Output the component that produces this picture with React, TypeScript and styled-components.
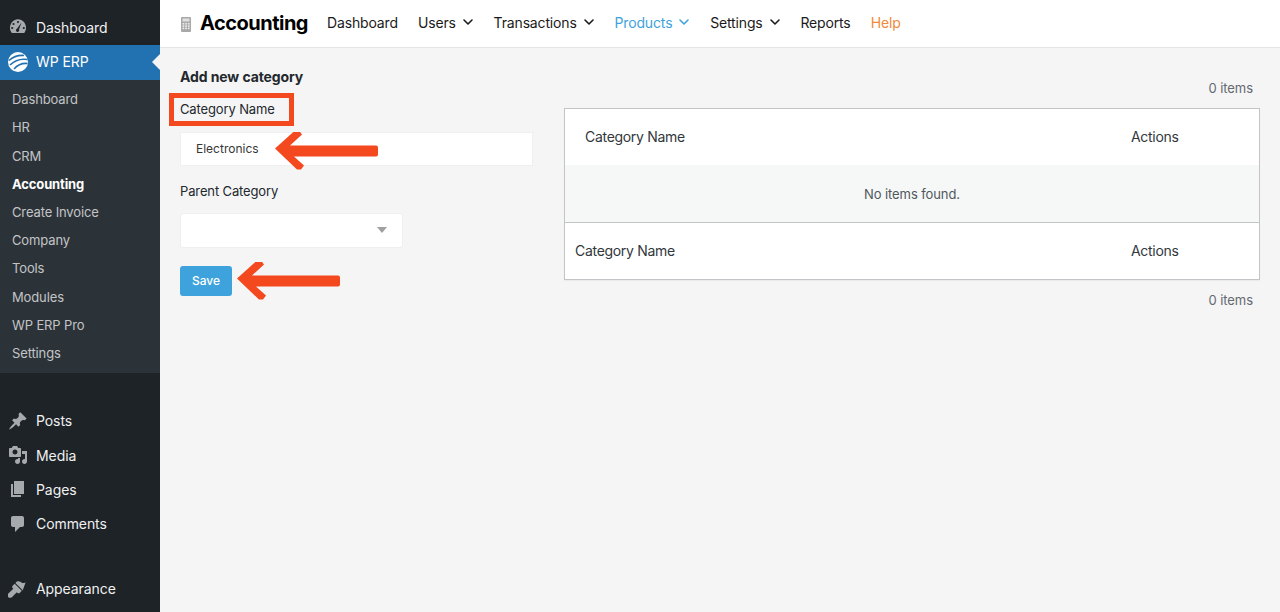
import React, { FC, ReactNode } from 'react';
import styled, { createGlobalStyle } from 'styled-components';
import { ChevronDown } from 'lucide-react';

const GlobalStyle = createGlobalStyle`
	html, body {
		margin: 0;
		padding: 0;
		height: 100%;
		background: #f5f5f5;
		font-family: Inter, "Liberation Sans", sans-serif;
		-webkit-font-smoothing: antialiased;
	}
	* {
		box-sizing: border-box;
	}
`;

const Page = styled.div`
	display: flex;
	width: 1280px;
	height: 612px;
	overflow: hidden;
`;

const Sidebar = styled.aside`
	width: 160px;
	flex-shrink: 0;
	padding-top: 11px;
	background-color: #1d2327;
`;

const MenuItem = styled.div<{ $active?: boolean }>`
	position: relative;
	display: flex;
	align-items: center;
	gap: 8px;
	height: 34.3px;
	padding: 0 0 1.5px 8px;
	font-size: 14px;
	letter-spacing: -0.08px;
	color: ${(p) => (p.$active ? '#fff' : '#f0f0f1')};
	background-color: ${(p) => (p.$active ? '#2271b1' : 'transparent')};
	${(p) =>
		p.$active &&
		`&::after {
			content: '';
			position: absolute;
			right: 0;
			top: 50%;
			margin-top: -8px;
			border: 8px solid transparent;
			border-right-color: #f5f5f5;
		}`}
`;

const MenuIcon = styled.svg`
	width: 20px;
	height: 20px;
	flex-shrink: 0;
	fill: #a7aaad;
`;

const SubMenu = styled.div`
	padding: 6.1px 0 5.9px;
	margin-bottom: 31px;
	background-color: #2c3338;
`;

const SubItem = styled.div<{ $current?: boolean }>`
	display: flex;
	align-items: center;
	height: 28.2px;
	padding: 0 0 1px 12px;
	font-size: 13px;
	letter-spacing: -0.13px;
	font-weight: ${(p) => (p.$current ? 700 : 400)};
	color: ${(p) => (p.$current ? '#fff' : '#c3c4c7')};
`;

const MenuGap = styled.div`
	height: 30.6px;
`;

const Main = styled.main`
	flex: 1;
	min-width: 0;
`;

const TopBar = styled.header`
	display: flex;
	align-items: center;
	height: 48px;
	padding: 0 0 1px 21px;
	background-color: #fff;
	border-bottom: 1px solid #e5e5e5;
`;

const AppIcon = styled.svg`
	width: 10px;
	height: 15px;
	margin-top: 2px;
	margin-right: 9px;
`;

const AppTitle = styled.h1`
	margin: 0 19px 0 0;
	font-size: 20px;
	font-weight: 700;
	letter-spacing: -0.5px;
	color: #000;
`;

const Nav = styled.nav`
	display: flex;
	align-items: center;
	gap: 20px;
	margin-top: -1px;
`;

const NavItem = styled.div<{ $color?: string }>`
	display: flex;
	align-items: center;
	gap: 4px;
	font-size: 14px;
	letter-spacing: -0.15px;
	color: ${(p) => p.$color || '#1a1a1a'};
	svg {
		margin-right: -2.2px;
		margin-top: -1px;
	}
`;

const Content = styled.div`
	display: flex;
	gap: 31px;
	padding: 20px 20px 0;
`;

const FormColumn = styled.section`
	width: 353px;
	flex-shrink: 0;
`;

const FormTitle = styled.h2`
	margin: 0 0 16px;
	height: 17px;
	line-height: 17px;
	font-size: 14px;
	font-weight: 700;
	letter-spacing: -0.1px;
	color: #23282d;
`;

const FieldLabel = styled.label<{ $marked?: boolean; $top?: number }>`
	position: relative;
	display: block;
	width: fit-content;
	height: 16px;
	margin-top: ${(p) => p.$top ?? 0}px;
	line-height: 16px;
	font-size: 13px;
	letter-spacing: -0.13px;
	color: #23282d;
	${(p) =>
		p.$marked &&
		`&::after {
			content: '';
			position: absolute;
			left: -11.5px;
			right: -19px;
			top: -8.5px;
			bottom: -9px;
			border: 5.5px solid #f4491f;
		}`}
`;

const FieldBox = styled.div<{ $width?: string; $radius?: number; $top: number; $height: number }>`
	position: relative;
	display: flex;
	align-items: center;
	justify-content: space-between;
	width: ${(p) => p.$width || '100%'};
	height: ${(p) => p.$height}px;
	margin-top: ${(p) => p.$top}px;
	padding: 0 16px 1px 15px;
	font-size: 12px;
	color: #363636;
	background-color: #fff;
	border: 1px solid #efefef;
	border-radius: ${(p) => p.$radius ?? 3}px;
`;

const Caret = styled.span`
	margin-right: -1px;
	border: 5px solid transparent;
	border-top: 6px solid #a0a0a0;
	border-bottom: 0;
`;

const SaveRow = styled.div`
	position: relative;
	margin-top: 18px;
`;

const SaveButton = styled.button`
	display: block;
	width: 52px;
	height: 30px;
	padding: 0 0 1px;
	font-family: inherit;
	font-size: 12px;
	font-weight: 500;
	color: #fff;
	background-color: #3ea3dc;
	border: none;
	border-radius: 3px;
`;

const Arrow = styled.svg<{ $left: number; $top: number }>`
	position: absolute;
	left: ${(p) => p.$left}px;
	top: ${(p) => p.$top}px;
	fill: #f4491f;
`;

const TableColumn = styled.section`
	flex: 1;
	min-width: 0;
`;

const ItemCount = styled.div`
	height: 16px;
	line-height: 16px;
	margin: 12px 7px 12px 0;
	text-align: right;
	font-size: 13px;
	letter-spacing: -0.05px;
	color: #646970;
`;

const ItemsTable = styled.div`
	border: 1px solid #c3c4c7;
	background-color: #fff;
	box-shadow: 0 1px 1px rgba(0, 0, 0, 0.04);
`;

const HeadRow = styled.div<{ $foot?: boolean }>`
	display: flex;
	align-items: center;
	justify-content: space-between;
	height: ${(p) => (p.$foot ? 57 : 56)}px;
	padding: 0 80px 2px ${(p) => (p.$foot ? 10 : 20)}px;
	font-size: 14px;
	letter-spacing: -0.3px;
	color: #32373c;
	border-top: ${(p) => (p.$foot ? '1px solid #c3c4c7' : 'none')};
`;

const EmptyRow = styled.div`
	display: flex;
	align-items: center;
	justify-content: center;
	height: 57px;
	font-size: 13px;
	letter-spacing: -0.1px;
	color: #50575e;
	background-color: #f6f7f7;
`;

const ActionsCell = styled.span`
	width: 48px;
`;

const TopIcon: FC<{ children: ReactNode }> = ({ children }) => <MenuIcon viewBox="0 0 20 20">{children}</MenuIcon>;

const submenu = ['Dashboard', 'HR', 'CRM', 'Accounting', 'Create Invoice', 'Company', 'Tools', 'Modules', 'WP ERP Pro', 'Settings'];

const ArrowShape: FC<{ left: number; top: number }> = ({ left, top }) => (
	<Arrow width="103" height="38" viewBox="0 0 103 38" $left={left} $top={top}>
		<path d="M0 19 20 1l4 0 3 4-12 11h86a2 2 0 0 1 2 2v7a2 2 0 0 1-2 2H19l10 9-3 4h-4z" transform="translate(0 -2.5)" />
	</Arrow>
);

const App: FC = () => {
	return (
		<Page>
			<GlobalStyle />
			<Sidebar>
				<MenuItem>
					<TopIcon>
						<path d="M3.76 16h12.48c1.1-1.43 1.76-3.22 1.76-5.15 0-4.68-3.58-8.5-8-8.5s-8 3.82-8 8.5c0 1.93.66 3.72 1.76 5.15z" />
						<circle cx="10" cy="5" r="1.1" fill="#1d2327" />
						<circle cx="5.5" cy="7" r="1.1" fill="#1d2327" />
						<circle cx="4.2" cy="11" r="1.1" fill="#1d2327" />
						<circle cx="15.8" cy="11" r="1.1" fill="#1d2327" />
						<path d="M13.5 5.5 11 12.5a1.6 1.6 0 1 1-2-.7z" fill="#1d2327" />
					</TopIcon>
					Dashboard
				</MenuItem>
				<MenuItem $active>
					<TopIcon>
						<circle cx="10" cy="10" r="10" fill="#fff" />
						<path d="M1 8.5C6 4 11 3 16 3.5M2 13C7 8 13 6.5 19.5 7.5M6 17c4-4.5 8-6 13.5-5.5" fill="none" stroke="#2271b1" strokeWidth="1.6" />
					</TopIcon>
					WP ERP
				</MenuItem>
				<SubMenu>
					{submenu.map((label) => (
						<SubItem key={label} $current={label === 'Accounting'}>
							{label}
						</SubItem>
					))}
				</SubMenu>
				<MenuItem>
					<TopIcon>
						<path d="M10.44 3.02l1.82-1.82 6.36 6.35-1.83 1.82c-1.05-.68-2.48-.57-3.41.36l-.75.75c-.92.93-1.04 2.35-.35 3.41l-1.83 1.82-2.41-2.41-2.8 2.79c-.42.42-3.38 2.71-3.8 2.29s1.86-3.39 2.28-3.81l2.79-2.79L4.1 9.36l1.83-1.82c1.05.69 2.48.57 3.4-.36l.75-.75c.93-.92 1.05-2.35.36-3.41z" />
					</TopIcon>
					Posts
				</MenuItem>
				<MenuItem>
					<TopIcon>
						<path
							fillRule="evenodd"
							d="M13 11V4c0-.55-.45-1-1-1h-1.67L9 1H5L3.67 3H2c-.55 0-1 .45-1 1v7c0 .55.45 1 1 1h10c.55 0 1-.45 1-1zM7 4.5c1.38 0 2.5 1.12 2.5 2.5S8.38 9.5 7 9.5 4.5 8.38 4.5 7 5.62 4.5 7 4.5zM14 6h5v10.5c0 1.38-1.12 2.5-2.5 2.5S14 17.88 14 16.5s1.12-2.5 2.5-2.5c.17 0 .34.02.5.05V9h-3V6zm-4 8.05V13h2v3.5c0 1.38-1.12 2.5-2.5 2.5S7 17.88 7 16.5 8.12 14 9.5 14c.17 0 .34.02.5.05z"
						/>
					</TopIcon>
					Media
				</MenuItem>
				<MenuItem>
					<TopIcon>
						<path d="M6 15V2h10v13H6zm-1 1h8v2H3V5h2v11z" />
					</TopIcon>
					Pages
				</MenuItem>
				<MenuItem>
					<TopIcon>
						<path d="M5 2h9c1.1 0 2 .9 2 2v7c0 1.1-.9 2-2 2h-2l-5 5v-5H5c-1.1 0-2-.9-2-2V4c0-1.1.9-2 2-2z" />
					</TopIcon>
					Comments
				</MenuItem>
				<MenuGap />
				<MenuItem>
					<TopIcon>
						<path d="M14.48 11.06L7.41 3.99l1.5-1.5c.5-.56 2.3-.47 3.51.32 1.21.8 1.43 1.28 2.66 1.28 1.5 0 2.5-.63 2.5-.63l-3.1 8.6zM6.7 4.7l7.07 7.07-2.12 2.12c-.59.59-1.53.59-2.12 0l-.71-.71-4.95 4.95c-.98.98-2.55.98-3.53 0s-.98-2.55 0-3.53l4.95-4.95-.71-.71c-.59-.59-.59-1.53 0-2.12z" />
					</TopIcon>
					Appearance
				</MenuItem>
			</Sidebar>
			<Main>
				<TopBar>
					<AppIcon viewBox="0 0 10 15">
						<rect width="10" height="15" rx="1" fill="#a8a8a8" />
						<rect x="1.5" y="1.5" width="7" height="3" fill="#e0e0e0" />
						{[6, 8.3, 10.6].map((y) =>
							[1.5, 4.2, 6.9].map((x) => <rect key={`${x}-${y}`} x={x} y={y} width="1.7" height="1.6" fill="#ececec" />),
						)}
					</AppIcon>
					<AppTitle>Accounting</AppTitle>
					<Nav>
						<NavItem>Dashboard</NavItem>
						<NavItem>
							Users
							<ChevronDown size={16} strokeWidth={2.4} />
						</NavItem>
						<NavItem>
							Transactions
							<ChevronDown size={16} strokeWidth={2.4} />
						</NavItem>
						<NavItem $color="#3ea3dc">
							Products
							<ChevronDown size={16} strokeWidth={2.4} />
						</NavItem>
						<NavItem>
							Settings
							<ChevronDown size={16} strokeWidth={2.4} />
						</NavItem>
						<NavItem>Reports</NavItem>
						<NavItem $color="#f0893a">Help</NavItem>
					</Nav>
				</TopBar>
				<Content>
					<FormColumn>
						<FormTitle>Add new category</FormTitle>
						<FieldLabel $marked>Category Name</FieldLabel>
						<FieldBox $top={15} $height={34} $radius={0}>
							Electronics
							<ArrowShape left={94} top={-1} />
						</FieldBox>
						<FieldLabel $top={17}>Parent Category</FieldLabel>
						<FieldBox $top={14} $height={35} $width="223px">
							<span />
							<Caret />
						</FieldBox>
						<SaveRow>
							<SaveButton>Save</SaveButton>
							<ArrowShape left={57} top={-4} />
						</SaveRow>
					</FormColumn>
					<TableColumn>
						<ItemCount>0 items</ItemCount>
						<ItemsTable>
							<HeadRow>
								<span>Category Name</span>
								<ActionsCell>Actions</ActionsCell>
							</HeadRow>
							<EmptyRow>No items found.</EmptyRow>
							<HeadRow $foot>
								<span>Category Name</span>
								<ActionsCell>Actions</ActionsCell>
							</HeadRow>
						</ItemsTable>
						<ItemCount>0 items</ItemCount>
					</TableColumn>
				</Content>
			</Main>
		</Page>
	);
};

export default App;
